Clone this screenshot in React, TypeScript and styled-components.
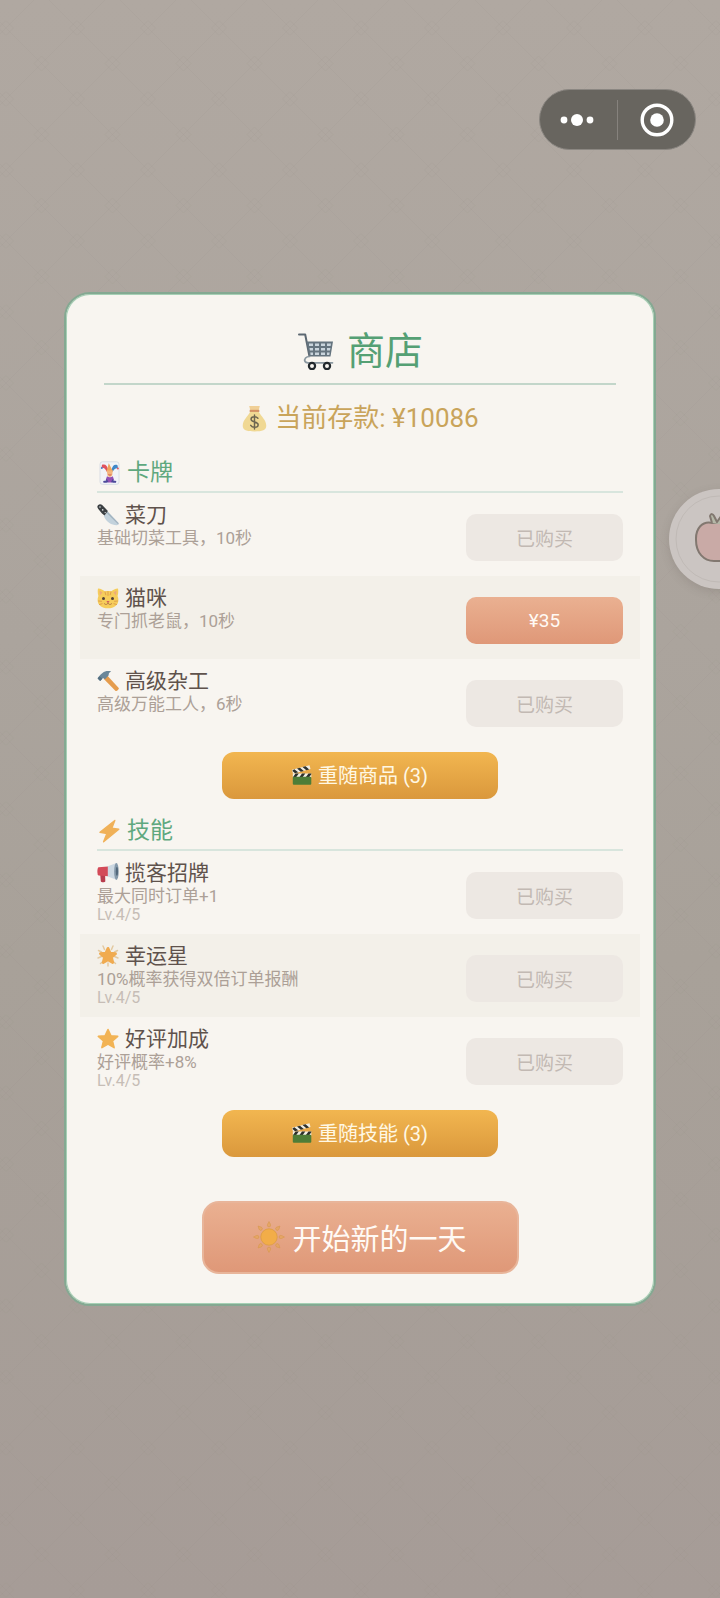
import React from "react";
import styled, { createGlobalStyle, css } from "styled-components";

const GlobalStyle = createGlobalStyle`
  *, *::before, *::after { box-sizing: border-box; }
  body {
    margin: 0;
    overflow-x: hidden;
    font-family: Roboto, "Noto Sans CJK SC", sans-serif;
    background: #aaa39c;
  }
  h1, h2, h3, p, ul { margin: 0; padding: 0; font-weight: 400; }
  ul { list-style: none; }
  button { font: inherit; border: 0; padding: 0; cursor: pointer; }
`;

const Page = styled.main`
  position: relative;
  min-height: 100vh;
  display: flex;
  align-items: center;
  padding: 0 64px;
  overflow: hidden;
  background: linear-gradient(180deg, #b0a8a1 0%, #aba49d 40%, #a8a199 60%, #a69c97 100%);
`;

const Backdrop = styled.svg`
  position: absolute;
  inset: 0;
  width: 100%;
  height: 100%;
`;

const Capsule = styled.nav`
  position: absolute;
  top: 89px;
  right: 24px;
  display: flex;
  align-items: center;
  width: 157px;
  height: 61px;
  border: 1px solid #8b8782;
  border-radius: 31px;
  background: #68655f;
`;

const CapsuleButton = styled.button`
  flex: 1;
  height: 100%;
  display: flex;
  align-items: center;
  justify-content: center;
  background: transparent;
`;

const CapsuleDivider = styled.span`
  width: 1px;
  height: 40px;
  background: #86827d;
`;

const TomatoButton = styled.button`
  position: absolute;
  top: 489px;
  right: -49px;
  width: 100px;
  height: 100px;
  border-radius: 50%;
  background: #cbc5c2;
  box-shadow: 0 3px 10px rgba(90, 80, 72, 0.18);
  svg { display: block; }
`;

const Card = styled.section`
  position: relative;
  flex: 1;
  min-width: 0;
  display: flex;
  flex-direction: column;
  padding: 29px 13px 30px;
  border: 2px solid #84a992;
  border-radius: 26px;
  background: #f8f5f0;
  box-shadow: inset 0 0 0 1px #a6d0b5;
`;

const Title = styled.h1`
  display: flex;
  align-items: center;
  justify-content: center;
  gap: 12px;
  margin: 0 25px;
  padding: 2px 0 6px;
  border-bottom: 2px solid #c3d6ca;
  color: #55a074;
  font-size: 38px;
  line-height: 52px;
`;

const Deposit = styled.p`
  display: flex;
  align-items: center;
  justify-content: center;
  gap: 7px;
  margin-top: 16px;
  color: #c9a45a;
  font-size: 26px;
  line-height: 34px;
`;

const Section = styled.section<{ $gap: number }>`
  display: flex;
  flex-direction: column;
  margin-top: ${(p) => p.$gap}px;
`;

const SectionHeading = styled.h2`
  display: flex;
  align-items: center;
  gap: 6px;
  margin: 0 18px;
  padding-bottom: 2px;
  border-bottom: 2px solid #d8e5dd;
  color: #5fa87e;
  font-size: 23px;
  line-height: 32px;
`;

const Row = styled.li`
  display: flex;
  align-items: flex-start;
  justify-content: space-between;
  height: 83px;
  margin: 0 1px;
  padding: 10px 17px 0;
  &:nth-child(even) { background: #f3f0e9; }
`;

const Name = styled.h3`
  display: flex;
  align-items: center;
  gap: 6px;
  color: #5f524c;
  font-size: 21px;
  line-height: 24px;
`;

const Description = styled.p`
  color: #aca097;
  font-size: 17px;
  line-height: 22px;
`;

const Level = styled.p`
  color: #c6bdb6;
  font-size: 16px;
  line-height: 16px;
`;

const coral = css`
  background: linear-gradient(180deg, #eab091 0%, #df9878 100%);
  color: #fffaf5;
`;

const BuyButton = styled.button`
  flex: none;
  width: 157px;
  height: 47px;
  margin-top: 11px;
  padding-bottom: 1px;
  border-radius: 10px;
  font-size: 19px;
  ${coral}
  &:disabled {
    background: #ede8e3;
    color: #c2b9b3;
    cursor: default;
  }
`;

const RerollButton = styled.button`
  align-self: center;
  display: flex;
  align-items: center;
  justify-content: center;
  gap: 6px;
  width: 276px;
  height: 47px;
  margin-top: 10px;
  padding-bottom: 2px;
  border-radius: 12px;
  background: linear-gradient(180deg, #f2b650 0%, #da983c 100%);
  color: #fff8e4;
  font-size: 20px;
`;

const StartButton = styled.button`
  align-self: center;
  display: flex;
  align-items: center;
  justify-content: center;
  gap: 7px;
  width: 317px;
  height: 73px;
  margin-top: 44px;
  padding-bottom: 2px;
  border: 2px solid #e8b59a;
  border-radius: 17px;
  font-size: 29px;
  ${coral}
`;

const Icon = styled.svg`
  flex: none;
  display: block;
`;

type IconProps = { size: number };

const Cart = ({ size }: IconProps) => (
  <Icon width={size} height={size} viewBox="0 0 36 38" aria-hidden="true">
    <path d="M1 2.500h6.200L11.300 23.500" fill="none" stroke="#5d6872" strokeWidth="2" strokeLinecap="round" strokeLinejoin="round" />
    <path d="M8.500 9.500H35L32.500 24.500H11.500Z" fill="#65747f" />
    <path d="M11 11.500h4v2.500h-4zM17 11.500h4v2.500h-4zM23 11.500h4v2.500h-4zM29 11.500h4l-.4 2.500H29zM11.500 16h3.500v2.500h-3.100zM17 16h4v2.500h-4zM23 16h4v2.500h-4zM29 16h3.400l-.4 2.500h-3zM12.300 20.500H15V23h-2.400zM17 20.500h4V23h-4zM23 20.500h4V23h-4zM29 20.500h2.700L31.300 23H29z" fill="#c9d4dc" />
    <path d="M11.500 24.500C8 24.500 6 27 7 29.500c.5 1 1.500 1.300 3 1.300H34.500" fill="none" stroke="#8a979f" strokeWidth="1.700" strokeLinecap="round" />
    <circle cx="14" cy="34" r="3.100" fill="#f8f5f0" stroke="#22282c" strokeWidth="2.200" />
    <circle cx="29" cy="34" r="3.100" fill="#f8f5f0" stroke="#22282c" strokeWidth="2.200" />
  </Icon>
);

const MoneyBag = ({ size }: IconProps) => (
  <Icon width={size} height={size} viewBox="0 0 26 28" aria-hidden="true">
    <path d="M7.500 1h11l-1.200 5H8.700Z" fill="#f0cf96" />
    <path d="M8.500 7C6 12 .8 15.500.8 21.500c0 4.500 4 5.900 12.200 5.900s12.200-1.400 12.200-5.900C25.200 15.500 20 12 17.500 7Z" fill="#f0d893" />
    <path d="M8 5h10v2.200H8z" fill="#d49163" />
    <path d="M16.500 13.800c-1-1.300-2-1.600-3.600-1.600-2 0-3.500 1-3.500 2.600 0 3.700 7.400 1.800 7.400 5.600 0 1.700-1.500 2.700-3.700 2.700-1.800 0-3.100-.6-4-2M13 10.300v14.500" fill="none" stroke="#6d6550" strokeWidth="1.500" strokeLinecap="round" />
  </Icon>
);

const Joker = ({ size }: IconProps) => (
  <Icon width={size} height={size} viewBox="0 0 24 24" aria-hidden="true">
    <rect x="3" y=".8" width="19" height="22.600" rx="2.500" fill="#f1f3f7" stroke="#d6dbe2" strokeWidth=".9" />
    <path d="M5 3.800C8 2.500 10.500 4.500 11.200 9L10 11C8.500 8 7 6.500 4.500 6.800Z" fill="#e0525e" />
    <path d="M20.500 4.200C17.500 2.800 15.500 4.700 14.500 9l1 2C17.500 7.800 18.500 7 21 7.300Z" fill="#3f87c9" />
    <path d="M9.500 10.500 11.800 2.300 16 10.500Z" fill="#efa45a" />
    <circle cx="4.800" cy="7" r="1" fill="#4a77c4" /><circle cx="20.900" cy="7.600" r="1" fill="#e05a68" />
    <path d="M9.800 9.500h6l-.6 4.800c-1 2-3.800 2-4.800 0Z" fill="#f3b57c" />
    <path d="M11.500 13.500c1 .8 1.900.8 2.800 0" stroke="#cf4f4f" fill="none" />
    <path d="M10 15.300c2 1.300 3.900 1.300 5.800 0l1.200 3.500-2.200 2.700h-4L8.800 18.800Z" fill="#9450b3" />
    <path d="M6.500 21.800 6.200 20l3-.6.300-2 2 3.500-2 .9zM19 21.800l.3-1.800-3-.6-.3-2-2 3.500 2 .9z" fill="#4c4a9a" />
  </Icon>
);

const Knife = ({ size }: IconProps) => (
  <Icon width={size} height={size} viewBox="0 0 22 22" aria-hidden="true">
    <path d="M10.500 7.500 21.500 19c.3 1.300-.5 2.300-2 2.200C14.500 21 9.800 18.500 6.700 12Z" fill="#c3d2dc" />
    <path d="M10.500 7.500 21.500 19c.2.600.1 1.200-.2 1.500L9.400 8.800Z" fill="#a3b4c0" />
    <path d="M1 1.200C2.200-.2 4-.1 5.200 1l5.700 6L7.500 11.500 5 9.500 1.300 5C.2 3.500 0 2.300 1 1.200Z" fill="#3b3f42" />
    <circle cx="3" cy="3" r=".8" fill="#dfe3e5" /><circle cx="5.700" cy="5.900" r=".8" fill="#dfe3e5" /><circle cx="8.200" cy="8.600" r=".7" fill="#dfe3e5" />
  </Icon>
);

const Cat = ({ size }: IconProps) => (
  <Icon width={size} height={size} viewBox="0 0 22 22" aria-hidden="true">
    <path d="M1 1.500C4 1.500 6 3 7.500 4.300c2.300-.5 4.700-.5 7 0C16 3 18 1.500 21 1.500c.5 3 .3 5-.4 7.500 2.700 7-1.800 12.300-9.600 12.300S-1.300 16 1.400 9C.7 6.500.5 4.500 1 1.500Z" fill="#f6cd5b" />
    <path d="m2.400 3.600 3.100 1.800-2.500 3zM19.600 3.600l-3.100 1.800 2.500 3z" fill="#eeaa7a" />
    <path d="M11 4.500v4M8 5l.8 2.800M14 5l-.8 2.800M1.500 14l3 .3M20.500 14l-3 .3M2.500 17.500l2.600-.8M19.500 17.500l-2.600-.8" stroke="#e0a04c" strokeWidth="1" strokeLinecap="round" />
    <circle cx="6.500" cy="11.500" r="1.500" fill="#544238" /><circle cx="15.500" cy="11.500" r="1.500" fill="#544238" />
    <path d="M9.300 14h3.400L11 16Z" fill="#d55d5d" />
    <path d="M11 16c-.3 1.800-2.600 2-3.600.8M11 16c.3 1.800 2.600 2 3.600.8" fill="none" stroke="#b57a48" strokeLinecap="round" />
  </Icon>
);

const Hammer = ({ size }: IconProps) => (
  <Icon width={size} height={size} viewBox="0 0 22 22" aria-hidden="true">
    <path d="m10 5.200 11.500 12.500c.9 1.100-1.300 4-2.900 3.300L6.600 8.800Z" fill="#e59c4d" />
    <path d="M.6 8.500C.6 7.500 3 5 5.500 3 8 1.200 10.800.6 14.200 1.600 12.200 2.600 11.500 3.500 11.700 5.200L8 9.200 6 7.900 3.200 11Z" fill="#6b8799" />
    <path d="m.6 8.500 2-2.200L5.300 8.700 3.200 11Z" fill="#546f80" />
  </Icon>
);

const Clapper = ({ size }: IconProps) => (
  <Icon width={size} height={size} viewBox="0 0 20 20" aria-hidden="true">
    <path d="M0 4.800 17.500.3l1 3.800L1 8.700Z" fill="#f1efe5" />
    <path d="m2.300 4.300 3.900 3-3.200.9L.3 5.700ZM8 2.700l3.800 3.200-3 .8L5 3.500ZM13.600 1.300l3.600 3.100-2.900.8-3.800-3.100Z" fill="#2d302b" />
    <path d="M.8 8.500h18.500v4H.8Z" fill="#f1efe5" />
    <path d="M3.500 8.500h3.300l-2.900 4H.8ZM10 8.500h3.300l-2.900 4H7.200ZM16.500 8.500h2.800v.7l-2.400 3.300h-3.300Z" fill="#2d302b" />
    <rect x=".8" y="11.700" width="18.500" height="8" rx="1" fill="#4d7d37" />
  </Icon>
);

const Bolt = ({ size }: IconProps) => (
  <Icon width={size} height={size} viewBox="0 0 24 24" aria-hidden="true">
    <path d="M17.800 1.500 3 13.300l6.900 1.200-3.300 8.300L21.800 10.200l-7-1Z" fill="#f0b158" stroke="#f0b158" strokeWidth="1.400" strokeLinejoin="round" />
  </Icon>
);

const Megaphone = ({ size }: IconProps) => (
  <Icon width={size} height={size} viewBox="0 0 22 22" aria-hidden="true">
    <path d="M3 10h5l.3 9.200c0 1.300-4.300 1.500-4.500 0Z" fill="#b83c4d" />
    <path d="M1.500 5.200 11 4.500v9.800l-9.500-.8C0 13 0 5.800 1.500 5.200Z" fill="#d34a58" />
    <path d="M10.800 4.300 19.500 1v16.800l-8.700-3.200Z" fill="#ccd8e2" />
    <ellipse cx="19.400" cy="9.400" rx="2.300" ry="8.500" fill="#8599aa" />
    <ellipse cx="19.900" cy="9.400" rx="1.100" ry="4.300" fill="#51677a" />
  </Icon>
);

const STAR = "m11 1.500 2.800 6.200 6.900.7-5.200 4.500 1.600 6.700-6.100-3.500-6.100 3.500 1.600-6.700L1.300 8.400l6.900-.7Z";

const Star = ({ size }: IconProps) => (
  <Icon width={size} height={size} viewBox="0 0 22 22" aria-hidden="true">
    <path d={STAR} fill="#f2b354" stroke="#f2b354" strokeWidth="1.600" strokeLinejoin="round" />
  </Icon>
);

const GlowingStar = ({ size }: IconProps) => (
  <Icon width={size} height={size} viewBox="0 0 22 22" aria-hidden="true">
    <path d="m6 1 1.500 3.500M16 1l-1.500 3.500M1 13l3.500-1.500M21 13l-3.500-1.500M3.500 18.500l3-2.500M18.500 18.500l-3-2.500M11 18v3M1.500 5.500l3 1.500M20.500 5.500l-3 1.500" stroke="#e3c9a0" strokeWidth="1.500" strokeLinecap="round" />
    <path transform="translate(2.400 2.200) scale(.78)" d={STAR} fill="#f0ab50" stroke="#f0ab50" strokeWidth="3.600" strokeLinejoin="round" />
  </Icon>
);

const Sun = ({ size }: IconProps) => (
  <Icon width={size} height={size} viewBox="0 0 30 30" aria-hidden="true">
    <g fill="#e6a566" stroke="#d99a4f" strokeWidth=".7">
      {[0, 45, 90, 135, 180, 225, 270, 315].map((angle) => (
        <path key={angle} transform={`rotate(${angle} 15 15)`} d="M15 .6c.8 1.500 1.500 2.500 1.500 3.400a1.500 1.500 0 0 1-3 0C13.500 3.100 14.200 2.100 15 .6Z" />
      ))}
    </g>
    <circle cx="15" cy="15" r="7.700" fill="#f2ad48" stroke="#dd9c45" strokeWidth=".8" />
  </Icon>
);

type Item = {
  icon: React.ComponentType<IconProps>;
  name: string;
  description: string;
  level?: string;
  price?: number;
};

const cards: Item[] = [
  { icon: Knife, name: "菜刀", description: "基础切菜工具，10秒" },
  { icon: Cat, name: "猫咪", description: "专门抓老鼠，10秒", price: 35 },
  { icon: Hammer, name: "高级杂工", description: "高级万能工人，6秒" },
];

const skills: Item[] = [
  { icon: Megaphone, name: "揽客招牌", description: "最大同时订单+1", level: "Lv.4/5" },
  { icon: GlowingStar, name: "幸运星", description: "10%概率获得双倍订单报酬", level: "Lv.4/5" },
  { icon: Star, name: "好评加成", description: "好评概率+8%", level: "Lv.4/5" },
];

const ItemList = ({ items }: { items: Item[] }) => (
  <ul>
    {items.map(({ icon: ItemIcon, name, description, level, price }) => (
      <Row key={name}>
        <div>
          <Name><ItemIcon size={22} />{name}</Name>
          <Description>{description}</Description>
          {level && <Level>{level}</Level>}
        </div>
        <BuyButton type="button" disabled={price === undefined}>
          {price === undefined ? "已购买" : `¥${price}`}
        </BuyButton>
      </Row>
    ))}
  </ul>
);

export default function App() {
  return (
    <>
      <GlobalStyle />
      <Page>
        <Backdrop aria-hidden="true">
          <defs>
            <pattern id="lattice" x="6" y="28" width="71" height="71" patternUnits="userSpaceOnUse">
              <path d="M0 0 71 71M71 0 0 71" stroke="#8b827b" strokeOpacity=".08" fill="none" />
              <path d="m35.500 28 7.500 7.500-7.500 7.500-7.500-7.500ZM0 7.500 7.500 0M63.500 0 71 7.500M0 63.500 7.500 71M63.500 71l7.500-7.500" stroke="#8b827b" strokeOpacity=".1" fill="none" />
            </pattern>
          </defs>
          <rect width="100%" height="100%" fill="url(#lattice)" />
        </Backdrop>

        <TomatoButton type="button" aria-label="番茄">
          <svg width="100" height="100" viewBox="0 0 100 100" aria-hidden="true">
            <circle cx="50" cy="50" r="43" fill="none" stroke="#c0bab6" />
            <path d="M44 34C33 31 26.500 40 27 51c0 13 8 21 18 21h12c10 0 18-8 18-21 0-11-8-20-18-17Z" fill="#c9aaa6" stroke="#827870" strokeWidth="2" />
            <path d="m43 34-2-7c1-3 3-2 4 0l3 6 5-7 4 8 5-4-1 7" fill="#b5b8a8" stroke="#827870" strokeWidth="2" strokeLinejoin="round" />
          </svg>
        </TomatoButton>

        <Card aria-labelledby="shop-title">
          <Title id="shop-title"><Cart size={38} />商店</Title>
          <Deposit><MoneyBag size={27} />当前存款: ¥10086</Deposit>

          <Section $gap={22}>
            <SectionHeading><Joker size={24} />卡牌</SectionHeading>
            <ItemList items={cards} />
            <RerollButton type="button"><Clapper size={20} />重随商品 (3)</RerollButton>
          </Section>

          <Section $gap={16}>
            <SectionHeading><Bolt size={24} />技能</SectionHeading>
            <ItemList items={skills} />
            <RerollButton type="button"><Clapper size={20} />重随技能 (3)</RerollButton>
          </Section>

          <StartButton type="button"><Sun size={32} />开始新的一天</StartButton>
        </Card>

        <Capsule aria-label="小程序">
          <CapsuleButton type="button" aria-label="更多">
            <svg width="40" height="14" viewBox="0 0 40 14" fill="#fff" aria-hidden="true">
              <circle cx="5" cy="7" r="3.400" /><circle cx="18" cy="7" r="6" /><circle cx="31" cy="7" r="3.400" />
            </svg>
          </CapsuleButton>
          <CapsuleDivider />
          <CapsuleButton type="button" aria-label="关闭">
            <svg width="34" height="34" viewBox="0 0 34 34" aria-hidden="true">
              <circle cx="17" cy="17" r="14.800" fill="none" stroke="#fff" strokeWidth="3.400" />
              <circle cx="17" cy="17" r="6.800" fill="#fff" />
            </svg>
          </CapsuleButton>
        </Capsule>
      </Page>
    </>
  );
}
